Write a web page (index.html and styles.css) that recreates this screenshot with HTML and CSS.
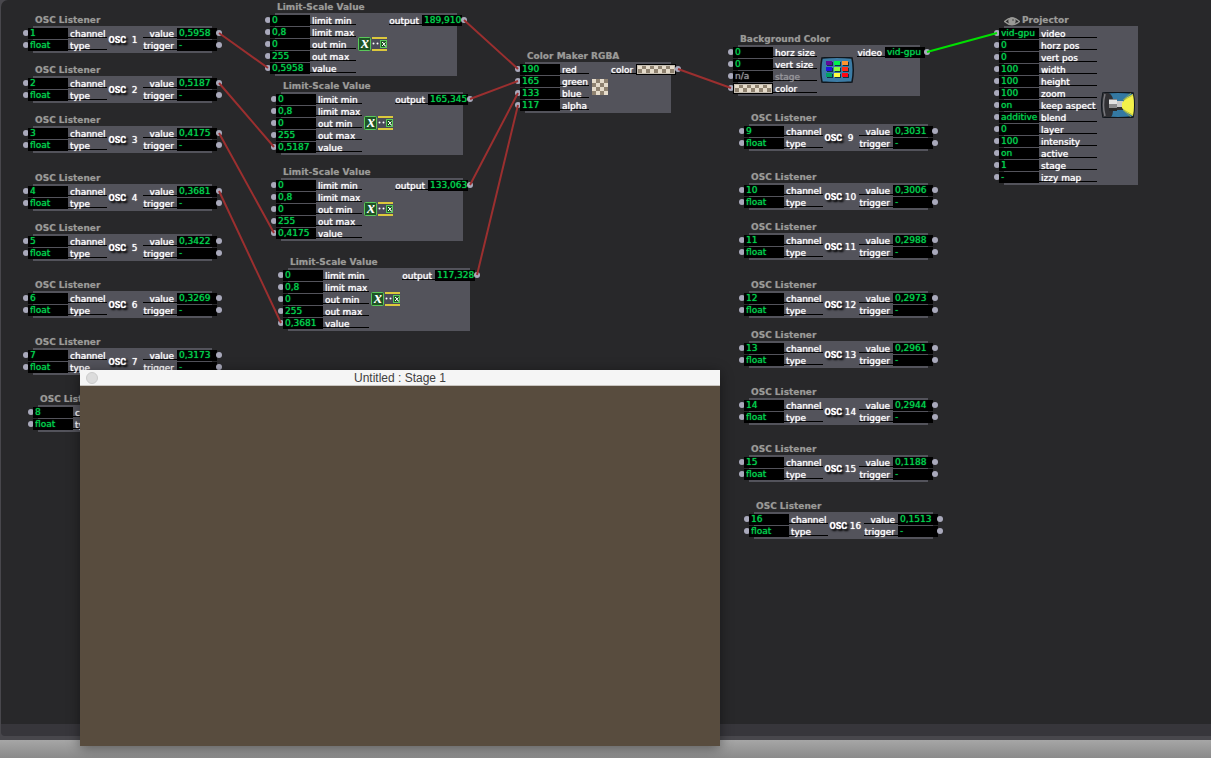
FILE: index.html
```
<!DOCTYPE html>
<html lang="en">
<head>
<meta charset="utf-8">
<title>Untitled : Stage 1</title>
<link rel="stylesheet" href="styles.css">
</head>
<body>
<svg class="symbols" aria-hidden="true">
  <symbol id="scale" viewBox="0 0 29 14">
    <rect x="14" y="0" width="15" height="14" fill="#4b4b58"/>
    <rect x="14" y="0" width="15" height="2" fill="#dcc83c"/>
    <rect x="14" y="12" width="15" height="2" fill="#dcc83c"/>
    <rect x="0.5" y="0.5" width="12" height="13" rx="1" fill="#1f5426" stroke="#5ac85a"/>
    <text x="3" y="11" class="glyph-x">x</text>
    <circle cx="15.5" cy="6.5" r="1" fill="#fff"/><circle cx="19.5" cy="6.5" r="1" fill="#fff"/>
    <rect x="22.500" y="3.500" width="6" height="7" fill="#1f5426" stroke="#5ac85a"/>
    <path d="M24 5.500h1l2 3.500h1M27.500 5.500l-3.500 3.500" fill="none" stroke="#fff"/>
  </symbol>
  <symbol id="grid" viewBox="0 0 34 26">
    <path d="M2 1Q17-0.500 32 1Q34.500 13 32 25Q17 26.500 2 25Q-0.500 13 2 1Z" fill="#3c7ca5" stroke="#10161c" stroke-width="1.500"/>
    <g fill="#123044"><path d="M7 5h6v4H7zM15 5h6v4h-6zM23 5h6v4h-6zM7 11h6v4H7zM15 11h6v4h-6zM23 11h6v4h-6zM7 17h6v4H7zM15 17h6v4h-6zM23 17h6v4h-6z"/></g>
    <path d="M6 4h6v4H6z" fill="#600b98"/><path d="M14 4h6v4h-6z" fill="#00f34a"/><path d="M22 4h6v4h-6z" fill="#ff9430"/>
    <path d="M6 10h6v4H6z" fill="#2013e0"/><path d="M14 10h6v4h-6z" fill="#86ff3e"/><path d="M22 10h6v4h-6z" fill="#ff2a16"/>
    <path d="M6 16h6v4H6z" fill="#00a263"/><path d="M14 16h6v4h-6z" fill="#ffff42"/><path d="M22 16h6v4h-6z" fill="#ff0714"/>
  </symbol>
  <symbol id="lamp" viewBox="0 0 34 26">
    <path d="M2 1Q17-0.500 32 1Q34.500 13 32 25Q17 26.500 2 25Q-0.500 13 2 1Z" fill="#3479a3" stroke="#10161c" stroke-width="1.500"/>
    <path d="M2 1H8Q12 4 12 8V18Q12 23 10 25H2Q0 13 2 1Z" fill="#303034"/>
    <path d="M4 2Q1 13 4 24" fill="none" stroke="#77777c" stroke-width="1.500"/>
    <path d="M8 7h8v12H8z" fill="#8a8a8c"/><path d="M8 8h8v4H8z" fill="#e2e2e2"/><path d="M8 16h8v3H8z" fill="#2a2a2a"/>
    <path d="M16 9h6v9h-6z" fill="#c9c9c9"/><path d="M16 15h6v3h-6z" fill="#333"/>
    <path d="M21 11L25 6L32 2Q34 13 32 24L25 20L21 16Z" fill="#f4f14a"/>
    <path d="M22 8L30 1M23 8L32 3M22 18L30 25M23 18L32 23" fill="none" stroke="#a9b43a" stroke-width="0.700"/>
  </symbol>
  <symbol id="eye" viewBox="0 0 16 10">
    <path d="M0.500 5.500Q8-1.500 15.500 5.500Q8 12 0.500 5.500Z" fill="none" stroke="#9a9a97" stroke-width="1.400"/>
    <circle cx="8" cy="5" r="3.700" fill="#9a9a97"/><circle cx="9" cy="4" r="0.700" fill="#28282a"/>
  </symbol>
</svg>

<main class="editor">
  <section class="canvas" aria-label="Scene editor">

    <article class="node listener n1"><h2>OSC Listener</h2><div class="body">
      <div class="ins"><label><i></i><input value="1"><span>channel</span></label><label><i></i><input value="float"><span>type</span></label></div>
      <div class="mid"><b>OSC</b><em>1</em></div>
      <div class="outs"><div><span>value</span><output>0,5958</output><i></i></div><div><span>trigger</span><output>-</output><i></i></div></div></div></article>

    <article class="node listener n2"><h2>OSC Listener</h2><div class="body">
      <div class="ins"><label><i></i><input value="2"><span>channel</span></label><label><i></i><input value="float"><span>type</span></label></div>
      <div class="mid"><b>OSC</b><em>2</em></div>
      <div class="outs"><div><span>value</span><output>0,5187</output><i></i></div><div><span>trigger</span><output>-</output><i></i></div></div></div></article>

    <article class="node listener n3"><h2>OSC Listener</h2><div class="body">
      <div class="ins"><label><i></i><input value="3"><span>channel</span></label><label><i></i><input value="float"><span>type</span></label></div>
      <div class="mid"><b>OSC</b><em>3</em></div>
      <div class="outs"><div><span>value</span><output>0,4175</output><i></i></div><div><span>trigger</span><output>-</output><i></i></div></div></div></article>

    <article class="node listener n4"><h2>OSC Listener</h2><div class="body">
      <div class="ins"><label><i></i><input value="4"><span>channel</span></label><label><i></i><input value="float"><span>type</span></label></div>
      <div class="mid"><b>OSC</b><em>4</em></div>
      <div class="outs"><div><span>value</span><output>0,3681</output><i></i></div><div><span>trigger</span><output>-</output><i></i></div></div></div></article>

    <article class="node listener n5"><h2>OSC Listener</h2><div class="body">
      <div class="ins"><label><i></i><input value="5"><span>channel</span></label><label><i></i><input value="float"><span>type</span></label></div>
      <div class="mid"><b>OSC</b><em>5</em></div>
      <div class="outs"><div><span>value</span><output>0,3422</output><i></i></div><div><span>trigger</span><output>-</output><i></i></div></div></div></article>

    <article class="node listener n6"><h2>OSC Listener</h2><div class="body">
      <div class="ins"><label><i></i><input value="6"><span>channel</span></label><label><i></i><input value="float"><span>type</span></label></div>
      <div class="mid"><b>OSC</b><em>6</em></div>
      <div class="outs"><div><span>value</span><output>0,3269</output><i></i></div><div><span>trigger</span><output>-</output><i></i></div></div></div></article>

    <article class="node listener n7"><h2>OSC Listener</h2><div class="body">
      <div class="ins"><label><i></i><input value="7"><span>channel</span></label><label><i></i><input value="float"><span>type</span></label></div>
      <div class="mid"><b>OSC</b><em>7</em></div>
      <div class="outs"><div><span>value</span><output>0,3173</output><i></i></div><div><span>trigger</span><output>-</output><i></i></div></div></div></article>

    <article class="node short n8"><h2>OSC List</h2><div class="body">
      <div class="ins"><label><i></i><input value="8" aria-label="channel"><span>c</span></label><label><i></i><input value="float" aria-label="type"><span>ty</span></label></div></div></article>

    <article class="node listener n9"><h2>OSC Listener</h2><div class="body">
      <div class="ins"><label><i></i><input value="9"><span>channel</span></label><label><i></i><input value="float"><span>type</span></label></div>
      <div class="mid"><b>OSC</b><em>9</em></div>
      <div class="outs"><div><span>value</span><output>0,3031</output><i></i></div><div><span>trigger</span><output>-</output><i></i></div></div></div></article>

    <article class="node listener n10"><h2>OSC Listener</h2><div class="body">
      <div class="ins"><label><i></i><input value="10"><span>channel</span></label><label><i></i><input value="float"><span>type</span></label></div>
      <div class="mid"><b>OSC</b><em>10</em></div>
      <div class="outs"><div><span>value</span><output>0,3006</output><i></i></div><div><span>trigger</span><output>-</output><i></i></div></div></div></article>

    <article class="node listener n11"><h2>OSC Listener</h2><div class="body">
      <div class="ins"><label><i></i><input value="11"><span>channel</span></label><label><i></i><input value="float"><span>type</span></label></div>
      <div class="mid"><b>OSC</b><em>11</em></div>
      <div class="outs"><div><span>value</span><output>0,2988</output><i></i></div><div><span>trigger</span><output>-</output><i></i></div></div></div></article>

    <article class="node listener n12"><h2>OSC Listener</h2><div class="body">
      <div class="ins"><label><i></i><input value="12"><span>channel</span></label><label><i></i><input value="float"><span>type</span></label></div>
      <div class="mid"><b>OSC</b><em>12</em></div>
      <div class="outs"><div><span>value</span><output>0,2973</output><i></i></div><div><span>trigger</span><output>-</output><i></i></div></div></div></article>

    <article class="node listener n13"><h2>OSC Listener</h2><div class="body">
      <div class="ins"><label><i></i><input value="13"><span>channel</span></label><label><i></i><input value="float"><span>type</span></label></div>
      <div class="mid"><b>OSC</b><em>13</em></div>
      <div class="outs"><div><span>value</span><output>0,2961</output><i></i></div><div><span>trigger</span><output>-</output><i></i></div></div></div></article>

    <article class="node listener n14"><h2>OSC Listener</h2><div class="body">
      <div class="ins"><label><i></i><input value="14"><span>channel</span></label><label><i></i><input value="float"><span>type</span></label></div>
      <div class="mid"><b>OSC</b><em>14</em></div>
      <div class="outs"><div><span>value</span><output>0,2944</output><i></i></div><div><span>trigger</span><output>-</output><i></i></div></div></div></article>

    <article class="node listener n15"><h2>OSC Listener</h2><div class="body">
      <div class="ins"><label><i></i><input value="15"><span>channel</span></label><label><i></i><input value="float"><span>type</span></label></div>
      <div class="mid"><b>OSC</b><em>15</em></div>
      <div class="outs"><div><span>value</span><output>0,1188</output><i></i></div><div><span>trigger</span><output>-</output><i></i></div></div></div></article>

    <article class="node listener n16"><h2>OSC Listener</h2><div class="body">
      <div class="ins"><label><i></i><input value="16"><span>channel</span></label><label><i></i><input value="float"><span>type</span></label></div>
      <div class="mid"><b>OSC</b><em>16</em></div>
      <div class="outs"><div><span>value</span><output>0,1513</output><i></i></div><div><span>trigger</span><output>-</output><i></i></div></div></div></article>

    <article class="node limit l1"><h2>Limit-Scale Value</h2><div class="body">
      <div class="ins"><label><i></i><input value="0"><span>limit min</span></label><label><i></i><input value="0,8"><span>limit max</span></label><label><i></i><input value="0"><span>out min</span></label><label><i></i><input value="255"><span>out max</span></label><label><i></i><input value="0,5958"><span>value</span></label></div>
      <div class="mid"><svg width="29" height="14"><use href="#scale"/></svg></div>
      <div class="outs"><div><span>output</span><output>189,910</output><i></i></div></div></div></article>

    <article class="node limit l2"><h2>Limit-Scale Value</h2><div class="body">
      <div class="ins"><label><i></i><input value="0"><span>limit min</span></label><label><i></i><input value="0,8"><span>limit max</span></label><label><i></i><input value="0"><span>out min</span></label><label><i></i><input value="255"><span>out max</span></label><label><i></i><input value="0,5187"><span>value</span></label></div>
      <div class="mid"><svg width="29" height="14"><use href="#scale"/></svg></div>
      <div class="outs"><div><span>output</span><output>165,345</output><i></i></div></div></div></article>

    <article class="node limit l3"><h2>Limit-Scale Value</h2><div class="body">
      <div class="ins"><label><i></i><input value="0"><span>limit min</span></label><label><i></i><input value="0,8"><span>limit max</span></label><label><i></i><input value="0"><span>out min</span></label><label><i></i><input value="255"><span>out max</span></label><label><i></i><input value="0,4175"><span>value</span></label></div>
      <div class="mid"><svg width="29" height="14"><use href="#scale"/></svg></div>
      <div class="outs"><div><span>output</span><output>133,063</output><i></i></div></div></div></article>

    <article class="node limit l4"><h2>Limit-Scale Value</h2><div class="body">
      <div class="ins"><label><i></i><input value="0"><span>limit min</span></label><label><i></i><input value="0,8"><span>limit max</span></label><label><i></i><input value="0"><span>out min</span></label><label><i></i><input value="255"><span>out max</span></label><label><i></i><input value="0,3681"><span>value</span></label></div>
      <div class="mid"><svg width="29" height="14"><use href="#scale"/></svg></div>
      <div class="outs"><div><span>output</span><output>117,328</output><i></i></div></div></div></article>

    <article class="node maker"><h2>Color Maker RGBA</h2><div class="body">
      <div class="ins"><label><i></i><input value="190"><span>red</span></label><label><i></i><input value="165"><span>green</span></label><label><i></i><input value="133"><span>blue</span></label><label><i></i><input value="117"><span>alpha</span></label></div>
      <div class="mid"><div class="checker tile"></div></div>
      <div class="outs"><div><span>color</span><output class="checker well" aria-label="color"></output><i></i></div></div></div></article>

    <article class="node background"><h2>Background Color</h2><div class="body">
      <div class="ins"><label><i></i><input value="0"><span>horz size</span></label><label><i></i><input value="0"><span>vert size</span></label><label class="off"><i></i><input value="n/a" disabled><span>stage</span></label><label><i></i><button type="button" class="checker well" aria-label="Choose color"></button><span>color</span></label></div>
      <div class="mid"><svg width="34" height="26"><use href="#grid"/></svg></div>
      <div class="outs"><div><span>video</span><output>vid-gpu</output><i></i></div></div></div></article>

    <article class="node projector"><h2><svg width="16" height="10"><use href="#eye"/></svg>Projector</h2><div class="body">
      <div class="ins"><label><i></i><input value="vid-gpu"><span>video</span></label><label><i></i><input value="0"><span>horz pos</span></label><label><i></i><input value="0"><span>vert pos</span></label><label><i></i><input value="100"><span>width</span></label><label><i></i><input value="100"><span>height</span></label><label><i></i><input value="100"><span>zoom</span></label><label><i></i><input value="on"><span>keep aspect</span></label><label><i></i><input value="additive"><span>blend</span></label><label><i></i><input value="0"><span>layer</span></label><label><i></i><input value="100"><span>intensity</span></label><label><i></i><input value="on"><span>active</span></label><label><i></i><input value="1"><span>stage</span></label><label><i></i><input value="-"><span>izzy map</span></label></div>
      <div class="mid"><svg width="34" height="26"><use href="#lamp"/></svg></div></div></article>

    <svg class="wires" aria-hidden="true">
      <path d="M219 33L268 68M219 83L274 147M219 133L274 233M219 191L281 323M464 20L518 69M470 99L518 81M470 185L518 93M477 275L518 105M678 69L731 88"/>
      <path class="live" d="M927 52L997 33"/>
    </svg>
  </section>
  <div class="scrollbar"></div>
</main>
<footer class="desk"></footer>

<section class="stage" aria-label="Stage window">
  <header><button type="button" aria-label="Close"></button><h1>Untitled : Stage 1</h1></header>
  <div class="picture"></div>
</section>
</body>
</html>
```
FILE: styles.css
```
* { box-sizing: border-box; }
body {
  margin: 0;
  min-height: 100vh;
  display: flex;
  flex-direction: column;
  position: relative;
  overflow: hidden;
  background: #48474c;
  font: 9px/12px "DejaVu Sans", Verdana, sans-serif;
}
.symbols { display: none; }
.glyph-x { font: italic bold 16px "Liberation Serif", serif; fill: #fff; }

.editor { flex: 1; display: flex; flex-direction: column; padding: 0 0 4px 1px; }
.canvas { flex: 1; position: relative; background: #28282a; border-top-left-radius: 7px; }
.scrollbar { height: 12px; background: #37363b; border-bottom-left-radius: 4px; }
.desk { height: 18px; background: linear-gradient(#a6a6a6, #8a8a8a); }

/* Nodes */
.node { position: absolute; color: #fff; }
.node h2 {
  display: flex;
  align-items: center;
  gap: 2px;
  margin: 0;
  padding: 2px 0 0 2px;
  height: 13px;
  font-size: 9px;
  line-height: 11px;
  color: #9a9a97;
  white-space: nowrap;
  text-shadow: 0 0 1px #9a9a9780;
}
.body { display: flex; padding: 2px 0 1px; background: #53535b; }
.ins { flex: none; margin-left: -10px; }
.ins label, .outs > div { display: flex; height: 12px; }
.node i {
  flex: none;
  width: 6px;
  height: 6px;
  margin: 2px -1px 0 0;
  border-radius: 50%;
  background: #a9a9bb;
}
.outs i { margin: 2px 0 0 -1px; }
.node input, .node output, .well {
  flex: none;
  width: 40px;
  height: 11px;
  margin: 0;
  padding: 0 0 0 2px;
  border: 0;
  border-radius: 0;
  background: #000;
  color: #00d24c;
  font: inherit;
  line-height: 11px;
  white-space: nowrap;
  text-shadow: 0 0 1px currentColor;
}
.node span {
  flex: none;
  height: 10px;
  padding-left: 2px;
  border-bottom: 1px solid #000;
  line-height: 13px;
  white-space: nowrap;
  text-shadow: 0 0 1px currentColor;
}
.outs { flex: none; margin-right: -10px; }
.outs span { padding: 0 3px 0 0; text-align: right; }
.node .off, .node .off input { color: #96969a; }
.mid { flex: 1; display: flex; align-items: center; justify-content: center; padding-bottom: 2px; }
.mid svg { flex: none; display: block; }

.listener { width: 179px; }
.listener .ins span { width: 39px; }
.listener .outs span { width: 34px; }
.listener .mid { padding-bottom: 0; gap: 2px; }
.mid b { width: 17px; text-align: center; font: bold 9px/12px "Liberation Sans Narrow", Roboto, sans-serif; text-shadow: 0 0 1px #fff, 1px 1px 2px #000, 2px 2px 2px #000; }
.mid em { width: 14px; text-align: center; font-style: normal; text-shadow: 0 0 1px currentColor; }
.short .ins span { width: 39px; }
.limit { width: 182px; }
.limit .ins span { width: 46px; }
.limit .outs span { width: 33px; }
.limit .mid { justify-content: flex-start; padding-left: 2px; }
.maker { width: 146px; }
.maker .ins span { width: 29px; }
.maker .outs span { width: 25px; }
.background { width: 182px; }
.background .ins span { width: 44px; }
.background .outs span { width: 28px; }
.projector { width: 134px; }
.projector h2 { padding-left: 0; }
.projector .ins span { width: 58px; }

.checker { background: repeating-conic-gradient(#8f8270 0 25%, #e6dccb 0 50%) 0 0 / 8px 8px; }
.tile { width: 16px; height: 16px; }
.node .well {
  border: 1px solid #000;
  outline: 1px solid #c4bcb0;
  outline-offset: -2px;
  background: repeating-conic-gradient(#8f8270 0 25%, #e6dccb 0 50%) 1px 0 / 8px 8px;
}

/* Places on the free canvas */
.n1, .n2, .n3, .n4, .n5, .n6, .n7 { left: 32px; }
.n8 { left: 37px; }
.n9, .n10, .n11, .n12, .n13, .n14, .n15 { left: 748px; }
.n16 { left: 753px; }
.n1 { top: 13px; } .n2 { top: 63px; } .n3 { top: 113px; } .n4 { top: 171px; }
.n5 { top: 221px; } .n6 { top: 278px; } .n7 { top: 335px; } .n8 { top: 392px; }
.n9 { top: 111px; } .n10 { top: 170px; } .n11 { top: 220px; } .n12 { top: 278px; }
.n13 { top: 328px; } .n14 { top: 385px; } .n15 { top: 442px; } .n16 { top: 499px; }
.l1 { left: 274px; top: 0; }
.l2 { left: 280px; top: 79px; }
.l3 { left: 280px; top: 165px; }
.l4 { left: 287px; top: 255px; }
.maker { left: 524px; top: 49px; }
.background { left: 737px; top: 32px; }
.projector { left: 1003px; top: 13px; }

.wires { position: absolute; left: -1px; top: 0; width: 100%; height: 100%; overflow: visible; pointer-events: none; fill: none; stroke: #9b2f2f; stroke-width: 2px; }
.wires .live { stroke: #00e000; }

/* Stage window */
.stage {
  position: absolute;
  left: 80px;
  top: 370px;
  width: 640px;
  box-shadow: 0 2px 12px #00000070;
}
.stage header { display: flex; align-items: center; height: 16px; padding: 0 6px; background: #f5f5f5; border-bottom: 1px solid #c9c5c0; }
.stage header button { width: 12px; height: 12px; padding: 0; border: 1px solid #ccc; border-radius: 50%; background: #dcdcdc; }
.stage h1 { flex: 1; margin: 0 12px 0 0; text-align: center; font: 12px/16px "Liberation Sans", Arial, sans-serif; color: #404040; }
.picture { aspect-ratio: 16 / 9; background: #584c3e; }
```
